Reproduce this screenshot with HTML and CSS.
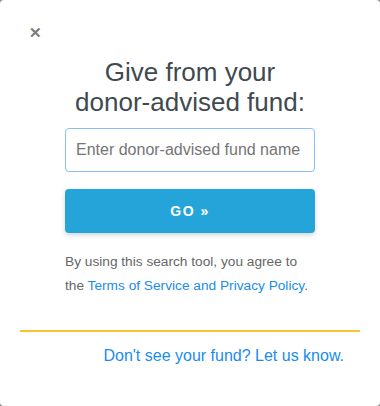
FILE: index.html
```html
<!DOCTYPE html>
<html>
<head>
<meta charset="utf-8">
<link rel="stylesheet" href="styles.css">
</head>
<body>
<div class="card">
  <div class="close-row"><span class="close">&#x2715;</span></div>
  <h1 class="title">Give from your<br>donor-advised fund:</h1>
  <div class="form">
    <input class="field" type="text" placeholder="Enter donor-advised fund name">
    <button class="go">GO &raquo;</button>
    <p class="terms">By using this search tool, you agree to the <a class="link" href="#">Terms of Service and Privacy Policy</a>.</p>
  </div>
  <div class="divider"></div>
  <div class="footer"><a class="link" href="#">Don't see your fund? Let us know.</a></div>
</div>
</body>
</html>
```
FILE: styles.css
```css
html, body { margin: 0; padding: 0; }
body {
  background: #8a8a8a;
  font-family: "Liberation Sans", Arial, sans-serif;
  width: 380px;
  height: 406px;
}
.card {
  box-sizing: border-box;
  width: 380px;
  height: 406px;
  background: #fff;
  border-radius: 4px;
  padding: 20px 20px 0;
}
.close-row { padding: 4px 0 0 9px; height: 20px; }
.close {
  font-size: 15px;
  font-weight: bold;
  color: #7a7a7a;
  line-height: 16px;
}
.title {
  margin: 13px 0 0;
  text-align: center;
  font-weight: normal;
  font-size: 26px;
  line-height: 30px;
  color: #3f4a50;
}
.form {
  margin: 11px 45px 0;
  display: flex;
  flex-direction: column;
}
.field {
  box-sizing: border-box;
  width: 250px;
  height: 44px;
  border: 1px solid #82c0f7;
  border-radius: 4px;
  padding: 0 10px;
  font-family: "Liberation Sans", Arial, sans-serif;
  font-size: 16px;
  color: #333;
  outline: none;
}
.field::placeholder { color: #757575; }
.go {
  margin-top: 17px;
  height: 44px;
  width: 250px;
  border: none;
  border-radius: 4px;
  background: #25a4d9;
  color: #fff;
  font-family: "Liberation Sans", Arial, sans-serif;
  font-weight: bold;
  font-size: 14px;
  letter-spacing: 1.5px;
  box-shadow: 0 2px 5px rgba(0,0,0,0.18);
}
.terms {
  margin: 17px 0 0;
  font-size: 13.7px;
  line-height: 24px;
  color: #666;
}
.link { color: #1a8ced; text-decoration: none; }
.divider {
  margin-top: 32px;
  height: 2px;
  background: #f8c530;
}
.footer {
  text-align: right;
  padding: 15px 16px 0 0;
  font-size: 16px;
}
```
